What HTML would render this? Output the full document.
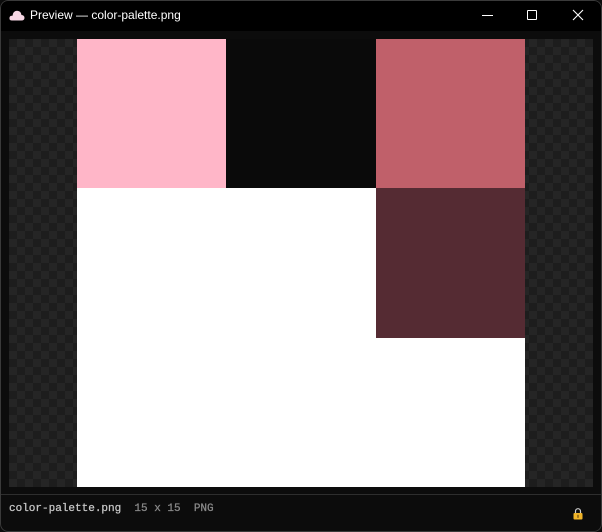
<!DOCTYPE html>
<html><head><style>
*{margin:0;padding:0;box-sizing:border-box}
body{width:602px;height:532px;background:#0c0c0c;position:relative;overflow:hidden;font-family:"Liberation Sans",sans-serif}
.win{position:absolute;left:0;top:0;width:602px;height:532px;border-radius:8px;overflow:hidden;background:#0c0c0c}
.frame{position:absolute;left:0;top:0;width:602px;height:532px;border:1px solid #3a3a3a;border-radius:8px;pointer-events:none}
.title{position:absolute;left:0;top:0;width:602px;height:31px;background:#000}
.title span{position:absolute;left:30px;top:8px;color:#fff;font-size:12px}
.chk{position:absolute;left:9px;top:39px;width:584px;height:448px;background-color:#1d1d1d;
background-image:linear-gradient(45deg,#252525 25%,transparent 25%,transparent 75%,#252525 75%),linear-gradient(45deg,#252525 25%,transparent 25%,transparent 75%,#252525 75%);
background-size:16px 16px;background-position:0 0,8px 8px}
.img{position:absolute;left:77px;top:39px;width:448px;height:448px;background:#fff}
.c{position:absolute}
.sep{position:absolute;left:0;top:494px;width:602px;height:1px;background:#2e2e2e}
.foot{position:absolute;left:9px;top:503px;font-family:"Liberation Mono",monospace;font-size:11px;color:#c8c8c8;white-space:pre;-webkit-text-stroke:0.25px #c8c8c8}
.foot b{font-weight:normal;color:#8a8a8a;-webkit-text-stroke:0.25px #8a8a8a}
</style></head><body><div class="win">
<div class="title">
<svg style="position:absolute;left:9px;top:10px" width="16" height="11" viewBox="0 0 16 11"><path d="M3 10.5 Q0 10.5 0.5 7.5 Q1 5.5 3.5 5.8 Q4 1 8 0.8 Q12 1 12.5 5 Q15.5 5.2 15.5 8 Q15.3 10.5 12.5 10.5 Z" fill="#f6d6e4"/></svg>
<span>Preview — color-palette.png</span>
<div style="position:absolute;left:482px;top:15px;width:11px;height:1px;background:#fff"></div>
<div style="position:absolute;left:527px;top:10px;width:10px;height:10px;border:1px solid #fff;border-radius:1px"></div>
<svg style="position:absolute;left:572px;top:9px" width="12" height="12"><path d="M1 1L11 11M11 1L1 11" stroke="#fff" stroke-width="1.1"/></svg>
</div>
<div class="chk"></div>
<div class="img">
<div class="c" style="left:0;top:0;background:#ffb6c8;width:149px;height:149px"></div>
<div class="c" style="left:149px;top:0;background:#0a0a0a;width:150px;height:149px"></div>
<div class="c" style="left:299px;top:0;background:#c0606a;width:149px;height:149px"></div>
<div class="c" style="left:299px;top:149px;background:#552b33;width:149px;height:150px"></div>
</div>
<div class="sep"></div>
<div class="foot">color-palette.png  <b>15 x 15  PNG</b></div>
<svg style="position:absolute;left:573px;top:508px" width="10" height="12" viewBox="0 0 10 12"><path d="M2.5 5V3.2a2.5 2.5 0 0 1 5 0V5" fill="none" stroke="#cfcfcf" stroke-width="1.2"/><rect x="0.5" y="5" width="9" height="6.5" rx="1" fill="#f0b429"/><rect x="4.4" y="6.8" width="1.2" height="3" fill="#6a4a10"/></svg>
<div class="frame"></div>
</div></body></html>
